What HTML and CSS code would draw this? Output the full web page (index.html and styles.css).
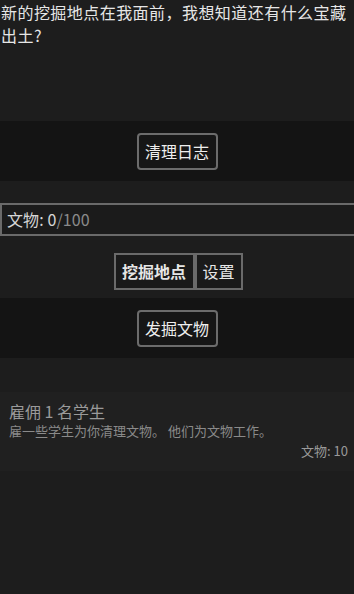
FILE: index.html
```html
<!DOCTYPE html>
<html lang="zh">
<head>
<meta charset="utf-8">
<link rel="stylesheet" href="styles.css">
</head>
<body>
<div class="page">
  <p class="story">新的挖掘地点在我面前，我想知道还有什么宝藏出土?</p>
  <div class="band band-log">
    <button class="btn">清理日志</button>
  </div>
  <div class="meter">
    <span class="meter-label">文物: 0</span><span class="meter-max">/100</span>
  </div>
  <div class="tabs">
    <button class="tab tab-active">挖掘地点</button><button class="tab">设置</button>
  </div>
  <div class="band band-dig">
    <button class="btn">发掘文物</button>
  </div>
  <div class="card">
    <div class="card-title">雇佣 1 名学生</div>
    <div class="card-desc">雇一些学生为你清理文物。 他们为文物工作。</div>
    <div class="card-cost">文物: 10</div>
  </div>
</div>
</body>
</html>
```
FILE: styles.css
```css
html, body {
  margin: 0;
  padding: 0;
  background: #1d1d1d;
  overflow: hidden;
}
body {
  width: 354px;
  height: 594px;
  font-family: "Noto Sans CJK SC", "Noto Sans", sans-serif;
  color: #e6e6e6;
}
.page {
  display: flex;
  flex-direction: column;
}
.story {
  margin: 0;
  padding: 1px 0 0 1px;
  font-size: 16px;
  line-height: 23px;
  letter-spacing: 0.45px;
  height: 121px;
  box-sizing: border-box;
}
.band {
  background: #141414;
  height: 60px;
  display: flex;
  justify-content: center;
  align-items: center;
}
.btn {
  font-family: inherit;
  font-size: 16px;
  color: #eeeeee;
  background: #161616;
  border: 2px solid #6c6c6c;
  border-radius: 4px;
  width: 81px;
  height: 37px;
  padding: 0;
  line-height: 33px;
}
.meter {
  margin-top: 22px;
  width: 370px;
  height: 33px;
  box-sizing: border-box;
  border: 2px solid #6a6a6a;
  background: #1b1b1b;
  padding: 0 0 0 5px;
  font-size: 16px;
  line-height: 29px;
  letter-spacing: 0.1px;
}
.meter-label { color: #d6d6d6; }
.meter-max { color: #8a8a8a; }
.tabs {
  margin-top: 17px;
  display: flex;
  justify-content: center;
  padding-left: 2px;
}
.tab {
  font-family: inherit;
  font-size: 16px;
  color: #e6e6e6;
  background: #1a1a1a;
  border: 2px solid #6a6a6a;
  border-radius: 0;
  height: 37px;
  padding: 0 6px;
  line-height: 33px;
}
.tab-active {
  font-weight: bold;
  width: 81px;
}
.tab + .tab {
  width: 48px;
}
.band-dig {
  margin-top: 8px;
}
.card {
  margin-top: 34px;
  background: #202020;
  padding: 8px 6px 10px 9px;
  display: flex;
  flex-direction: column;
}
.card-title {
  font-size: 16px;
  line-height: 22px;
  color: #9a9a9a;
}
.card-desc {
  font-size: 13px;
  line-height: 17px;
  color: #8a8a8a;
}
.card-cost {
  align-self: flex-end;
  font-size: 13px;
  line-height: 20px;
  color: #9a9a9a;
  margin-top: 2px;
}
```
